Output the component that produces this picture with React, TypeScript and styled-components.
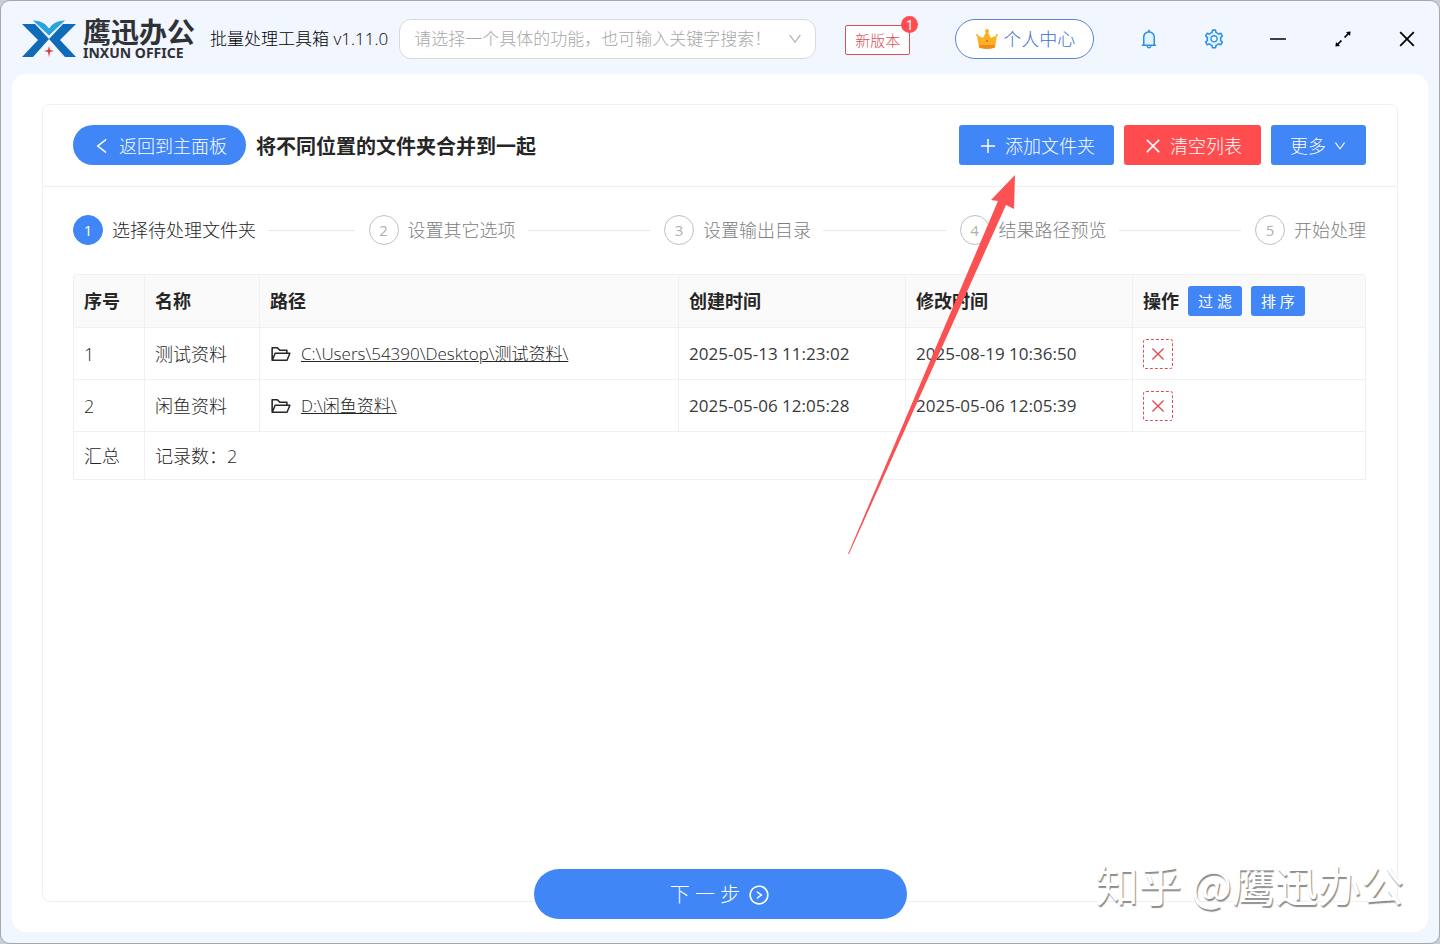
import React from "react";
import styled, { createGlobalStyle, css } from "styled-components";
import {
  AiOutlineArrowsAlt,
  AiOutlineClose,
  AiOutlineDown,
  AiOutlineFolderOpen,
  AiOutlineLeft,
  AiOutlineMinus,
  AiOutlinePlus,
  AiOutlineRightCircle,
  AiTwotoneBell,
  AiTwotoneSetting,
} from "react-icons/ai";

const blue = "#4086f6";
const red = "#ff4d4f";
const line = "#f0f0f0";

const GlobalStyle = createGlobalStyle`
  *, *::before, *::after { box-sizing: border-box; }
  body {
    margin: 0;
    background: #c9cdd6;
    color: #262626;
    font-family: "Open Sans", "Noto Sans CJK SC", sans-serif;
    font-size: 18px;
    font-weight: 300;
    line-height: 24px;
  }
  button, input { font: inherit; }
  button { cursor: pointer; white-space: nowrap; }
  svg { display: block; flex: none; }
`;

const Window = styled.div`
  position: relative;
  display: flex;
  flex-direction: column;
  min-height: 100vh;
  padding: 0 11px 11px;
  border: 1px solid #a6a9b4;
  border-radius: 10px;
  background: linear-gradient(#f2f6ff, #f0f7ff);
`;

const TitleBar = styled.header`
  display: flex;
  align-items: center;
  height: 73px;
  padding: 2px 10px 0;
`;

const Brand = styled.div`
  display: flex;
  align-items: center;
  gap: 7px;
  margin-right: 15px;
`;

const BrandText = styled.div`
  color: #2f3136;
  font-weight: 700;
`;

const BrandName = styled.div`
  font-size: 28px;
  line-height: 28px;
`;

const BrandLatin = styled.div`
  font-family: "Noto Sans", sans-serif;
  font-size: 14px;
  line-height: 14px;
`;

const AppName = styled.span`
  margin-right: 11px;
  color: #000;
  font-size: 17px;
  white-space: nowrap;
`;

const SearchBox = styled.label`
  display: flex;
  flex: 0 1 417px;
  align-items: center;
  height: 40px;
  padding: 0 12px 0 14px;
  border: 1px solid #d9d9d9;
  border-radius: 12px;
  background: #fff;
  color: #b4b4b4;
`;

const SearchInput = styled.input`
  flex: 1;
  min-width: 0;
  padding: 0;
  border: 0;
  outline: 0;
  background: none;
  font-size: 17px;
  &::placeholder { color: #a8a8a8; opacity: 1; }
`;

const VersionButton = styled.button`
  position: relative;
  height: 30px;
  margin: 2px 0 0 29px;
  padding: 0 9px;
  border: 1px solid #d9505a;
  border-radius: 2px;
  background: #fff;
  color: #d9505a;
  font-size: 15px;
`;

const Badge = styled.span`
  position: absolute;
  top: -10px;
  right: -9px;
  width: 17px;
  height: 17px;
  border-radius: 50%;
  background: ${red};
  color: #fff;
  font-size: 14px;
  font-weight: 400;
  line-height: 17px;
`;

const ProfileButton = styled.button`
  display: flex;
  align-items: center;
  gap: 4px;
  height: 40px;
  margin-left: 45px;
  padding: 0 18px 0 19px;
  border: 1px solid #5b84d0;
  border-radius: 20px;
  background: #fff;
  color: #3f6fd0;
`;

const WindowControls = styled.div`
  display: flex;
  justify-content: space-between;
  width: 280px;
  margin-left: auto;
`;

const IconButton = styled.button<{ $twoTone?: boolean }>`
  padding: 0;
  border: 0;
  background: none;
  color: #000;
  font-size: 22px;
  ${(p) =>
    p.$twoTone &&
    css`
      color: #2b8fe8;
      path[fill] { fill: #dff3ff; }
    `}
`;

const Workspace = styled.main`
  display: flex;
  flex: 1;
  flex-direction: column;
  padding: 30px 30px 13px;
  border-radius: 14px;
  background: #fff;
`;

const Card = styled.section`
  flex: 1;
  border: 1px solid ${line};
  border-radius: 8px;
`;

const CardHeader = styled.div`
  display: flex;
  align-items: center;
  gap: 10px;
  height: 82px;
  padding: 0 31px 2px 30px;
  border-bottom: 1px solid ${line};
`;

const Title = styled.h1`
  flex: 1;
  margin: 0;
  padding-top: 4px;
  font-size: 20px;
  font-weight: 700;
`;

const ActionButton = styled.button<{ $danger?: boolean; $pill?: boolean }>`
  display: flex;
  align-items: center;
  gap: 7px;
  height: 40px;
  padding: 2px 19px 0;
  border: 0;
  border-radius: ${(p) => (p.$pill ? 20 : 3)}px;
  background: ${(p) => (p.$danger ? red : blue)};
  color: #fff;
`;

const AddAnchor = styled.div`
  position: relative;
`;

const Pointer = styled.svg`
  position: absolute;
  top: 49px;
  right: 98px;
  pointer-events: none;
`;

const CardBody = styled.div`
  padding: 28px 31px 28px 30px;
`;

const Steps = styled.ol`
  display: flex;
  margin: 0 0 29px;
  padding: 0;
  list-style: none;
`;

const Step = styled.li<{ $active?: boolean }>`
  display: flex;
  flex: 1;
  align-items: center;
  color: ${(p) => (p.$active ? "#262626" : "#808080")};
  white-space: nowrap;
  &:last-child { flex: none; }
  &:not(:last-child)::after {
    content: "";
    flex: 1;
    height: 1px;
    margin: 0 14px 0 12px;
    background: #e8e8e8;
  }
`;

const StepNumber = styled.span<{ $active?: boolean }>`
  width: 30px;
  height: 30px;
  margin-right: 9px;
  border: 1px solid ${(p) => (p.$active ? blue : "#bfbfbf")};
  border-radius: 50%;
  background: ${(p) => (p.$active ? blue : "#fff")};
  color: ${(p) => (p.$active ? "#fff" : "#b0b0b0")};
  font-size: 15px;
  font-weight: 400;
  line-height: 28px;
  text-align: center;
`;

const FolderTable = styled.table`
  width: 100%;
  table-layout: fixed;
  border-spacing: 0;
  border-top: 1px solid ${line};
  border-left: 1px solid ${line};
  border-radius: 3px;
  text-align: left;
`;

const Col = styled.col<{ $width?: number }>`
  width: ${(p) => (p.$width ? `${p.$width}px` : "auto")};
`;

const HeadCell = styled.th`
  height: 53px;
  padding: 0 10px;
  border-right: 1px solid ${line};
  border-bottom: 1px solid ${line};
  background: #fafafa;
  font-weight: 700;
`;

const Cell = styled.td<{ $summary?: boolean }>`
  height: ${(p) => (p.$summary ? 48 : 52)}px;
  padding: 0 10px;
  border-right: 1px solid ${line};
  border-bottom: 1px solid ${line};
`;

const TimeCell = styled(Cell)`
  color: #3a3a3a;
  font-size: 17px;
  font-weight: 400;
`;

const Inline = styled.div`
  display: flex;
  align-items: center;
  gap: 9px;
`;

const PathLink = styled.a`
  color: inherit;
  font-size: 17px;
  text-decoration: underline;
  text-decoration-thickness: 1px;
`;

const SmallButton = styled.button`
  height: 30px;
  padding: 0 10px;
  border: 0;
  border-radius: 3px;
  background: ${blue};
  color: #fff;
  font-size: 15px;
  font-weight: 400;
`;

const RemoveButton = styled.button`
  display: flex;
  align-items: center;
  justify-content: center;
  width: 30px;
  height: 30px;
  padding: 0;
  border: 1px dashed #d9505a;
  border-radius: 3px;
  background: #fff;
  color: #e0525a;
`;

const NextButton = styled.button`
  position: relative;
  display: flex;
  align-items: center;
  align-self: center;
  justify-content: center;
  gap: 8px;
  width: 373px;
  height: 50px;
  margin-top: -33px;
  padding-top: 3px;
  border: 0;
  border-radius: 25px;
  background: ${blue};
  color: #fff;
  font-size: 20px;
`;

const Watermark = styled.div`
  position: absolute;
  right: 35px;
  bottom: 36px;
  color: #fff;
  font-family: "Noto Sans CJK SC", sans-serif;
  font-size: 43px;
  font-weight: 400;
  line-height: 48px;
  text-shadow: 1px 2px 1px #8c8c8c;
  pointer-events: none;
`;

const LogoMark = () => (
  <svg width="54" height="40" viewBox="0 0 54 40" aria-hidden="true">
    <path d="M0 5h13l14 15-16 18H0l16-17z" fill="#0f6ab8" />
    <path d="M54 5H41L27 20l16 18h11L38 21z" fill="#0f6ab8" />
    <path d="M10 1c7 0 13 2 17 8 4-6 10-8 17-8L27 17z" fill="#2ba3e0" stroke="#f2f6ff" strokeWidth="1" />
    <path d="M27 27l1 4 4 1-4 1-1 5-1-5-4-1 4-1z" fill="#e8332f" />
  </svg>
);

const Crown = () => (
  <svg width="24" height="24" viewBox="0 0 24 24" aria-hidden="true">
    <path d="M2 8l6 3 3-6h2l3 6 6-3-2 13H4z" fill="#fdb022" />
    <path d="M4 18h16l-1 3q-7 2-14 0z" fill="#f08a1c" />
    <circle cx="12" cy="4" r="2" fill="#fdb022" />
    <circle cx="2" cy="8" r="1" fill="#fdb022" />
    <circle cx="22" cy="8" r="1" fill="#fdb022" />
    <circle cx="12" cy="14" r="1" fill="#e5602a" />
  </svg>
);

const steps = ["选择待处理文件夹", "设置其它选项", "设置输出目录", "结果路径预览", "开始处理"];

const folders = [
  { name: "测试资料", path: "C:\\Users\\54390\\Desktop\\测试资料\\", created: "2025-05-13 11:23:02", modified: "2025-08-19 10:36:50" },
  { name: "闲鱼资料", path: "D:\\闲鱼资料\\", created: "2025-05-06 12:05:28", modified: "2025-05-06 12:05:39" },
];

export default function App() {
  return (
    <Window>
      <GlobalStyle />
      <TitleBar>
        <Brand>
          <LogoMark />
          <BrandText>
            <BrandName>鹰迅办公</BrandName>
            <BrandLatin>INXUN OFFICE</BrandLatin>
          </BrandText>
        </Brand>
        <AppName>批量处理工具箱 v1.11.0</AppName>
        <SearchBox>
          <SearchInput aria-label="搜索功能" placeholder="请选择一个具体的功能，也可输入关键字搜索！" />
          <AiOutlineDown size={16} />
        </SearchBox>
        <VersionButton>
          新版本<Badge>1</Badge>
        </VersionButton>
        <ProfileButton>
          <Crown />
          个人中心
        </ProfileButton>
        <WindowControls>
          <IconButton $twoTone aria-label="通知"><AiTwotoneBell /></IconButton>
          <IconButton $twoTone aria-label="设置"><AiTwotoneSetting /></IconButton>
          <IconButton aria-label="最小化"><AiOutlineMinus /></IconButton>
          <IconButton aria-label="最大化"><AiOutlineArrowsAlt /></IconButton>
          <IconButton aria-label="关闭"><AiOutlineClose /></IconButton>
        </WindowControls>
      </TitleBar>

      <Workspace>
        <Card>
          <CardHeader>
            <ActionButton $pill>
              <AiOutlineLeft size={20} />
              返回到主面板
            </ActionButton>
            <Title>将不同位置的文件夹合并到一起</Title>
            <AddAnchor>
              <ActionButton>
                <AiOutlinePlus size={20} />
                添加文件夹
              </ActionButton>
              <Pointer width="168" height="381" viewBox="0 0 168 381" aria-hidden="true">
                <path d="M167 1 143 26l7 1L0 380h1L158 31l8 4z" fill="#fb5152" />
              </Pointer>
            </AddAnchor>
            <ActionButton $danger>
              <AiOutlineClose size={20} />
              清空列表
            </ActionButton>
            <ActionButton>
              更多
              <AiOutlineDown size={14} />
            </ActionButton>
          </CardHeader>

          <CardBody>
            <Steps>
              {steps.map((label, i) => (
                <Step key={label} $active={i === 0}>
                  <StepNumber $active={i === 0}>{i + 1}</StepNumber>
                  {label}
                </Step>
              ))}
            </Steps>

            <FolderTable>
              <colgroup>
                <Col $width={71} />
                <Col $width={115} />
                <Col />
                <Col $width={227} />
                <Col $width={227} />
                <Col $width={233} />
              </colgroup>
              <thead>
                <tr>
                  <HeadCell>序号</HeadCell>
                  <HeadCell>名称</HeadCell>
                  <HeadCell>路径</HeadCell>
                  <HeadCell>创建时间</HeadCell>
                  <HeadCell>修改时间</HeadCell>
                  <HeadCell>
                    <Inline>
                      操作
                      <SmallButton>过 滤</SmallButton>
                      <SmallButton>排 序</SmallButton>
                    </Inline>
                  </HeadCell>
                </tr>
              </thead>
              <tbody>
                {folders.map((f, i) => (
                  <tr key={f.path}>
                    <Cell>{i + 1}</Cell>
                    <Cell>{f.name}</Cell>
                    <Cell>
                      <Inline>
                        <AiOutlineFolderOpen size={22} />
                        <PathLink href="#">{f.path}</PathLink>
                      </Inline>
                    </Cell>
                    <TimeCell>{f.created}</TimeCell>
                    <TimeCell>{f.modified}</TimeCell>
                    <Cell>
                      <RemoveButton aria-label={`移除${f.name}`}><AiOutlineClose size={18} /></RemoveButton>
                    </Cell>
                  </tr>
                ))}
              </tbody>
              <tfoot>
                <tr>
                  <Cell $summary>汇总</Cell>
                  <Cell $summary colSpan={5}>记录数：2</Cell>
                </tr>
              </tfoot>
            </FolderTable>
          </CardBody>
        </Card>
        <NextButton>
          下 一 步
          <AiOutlineRightCircle size={22} />
        </NextButton>
      </Workspace>
      <Watermark>知乎 @鹰迅办公</Watermark>
    </Window>
  );
}
